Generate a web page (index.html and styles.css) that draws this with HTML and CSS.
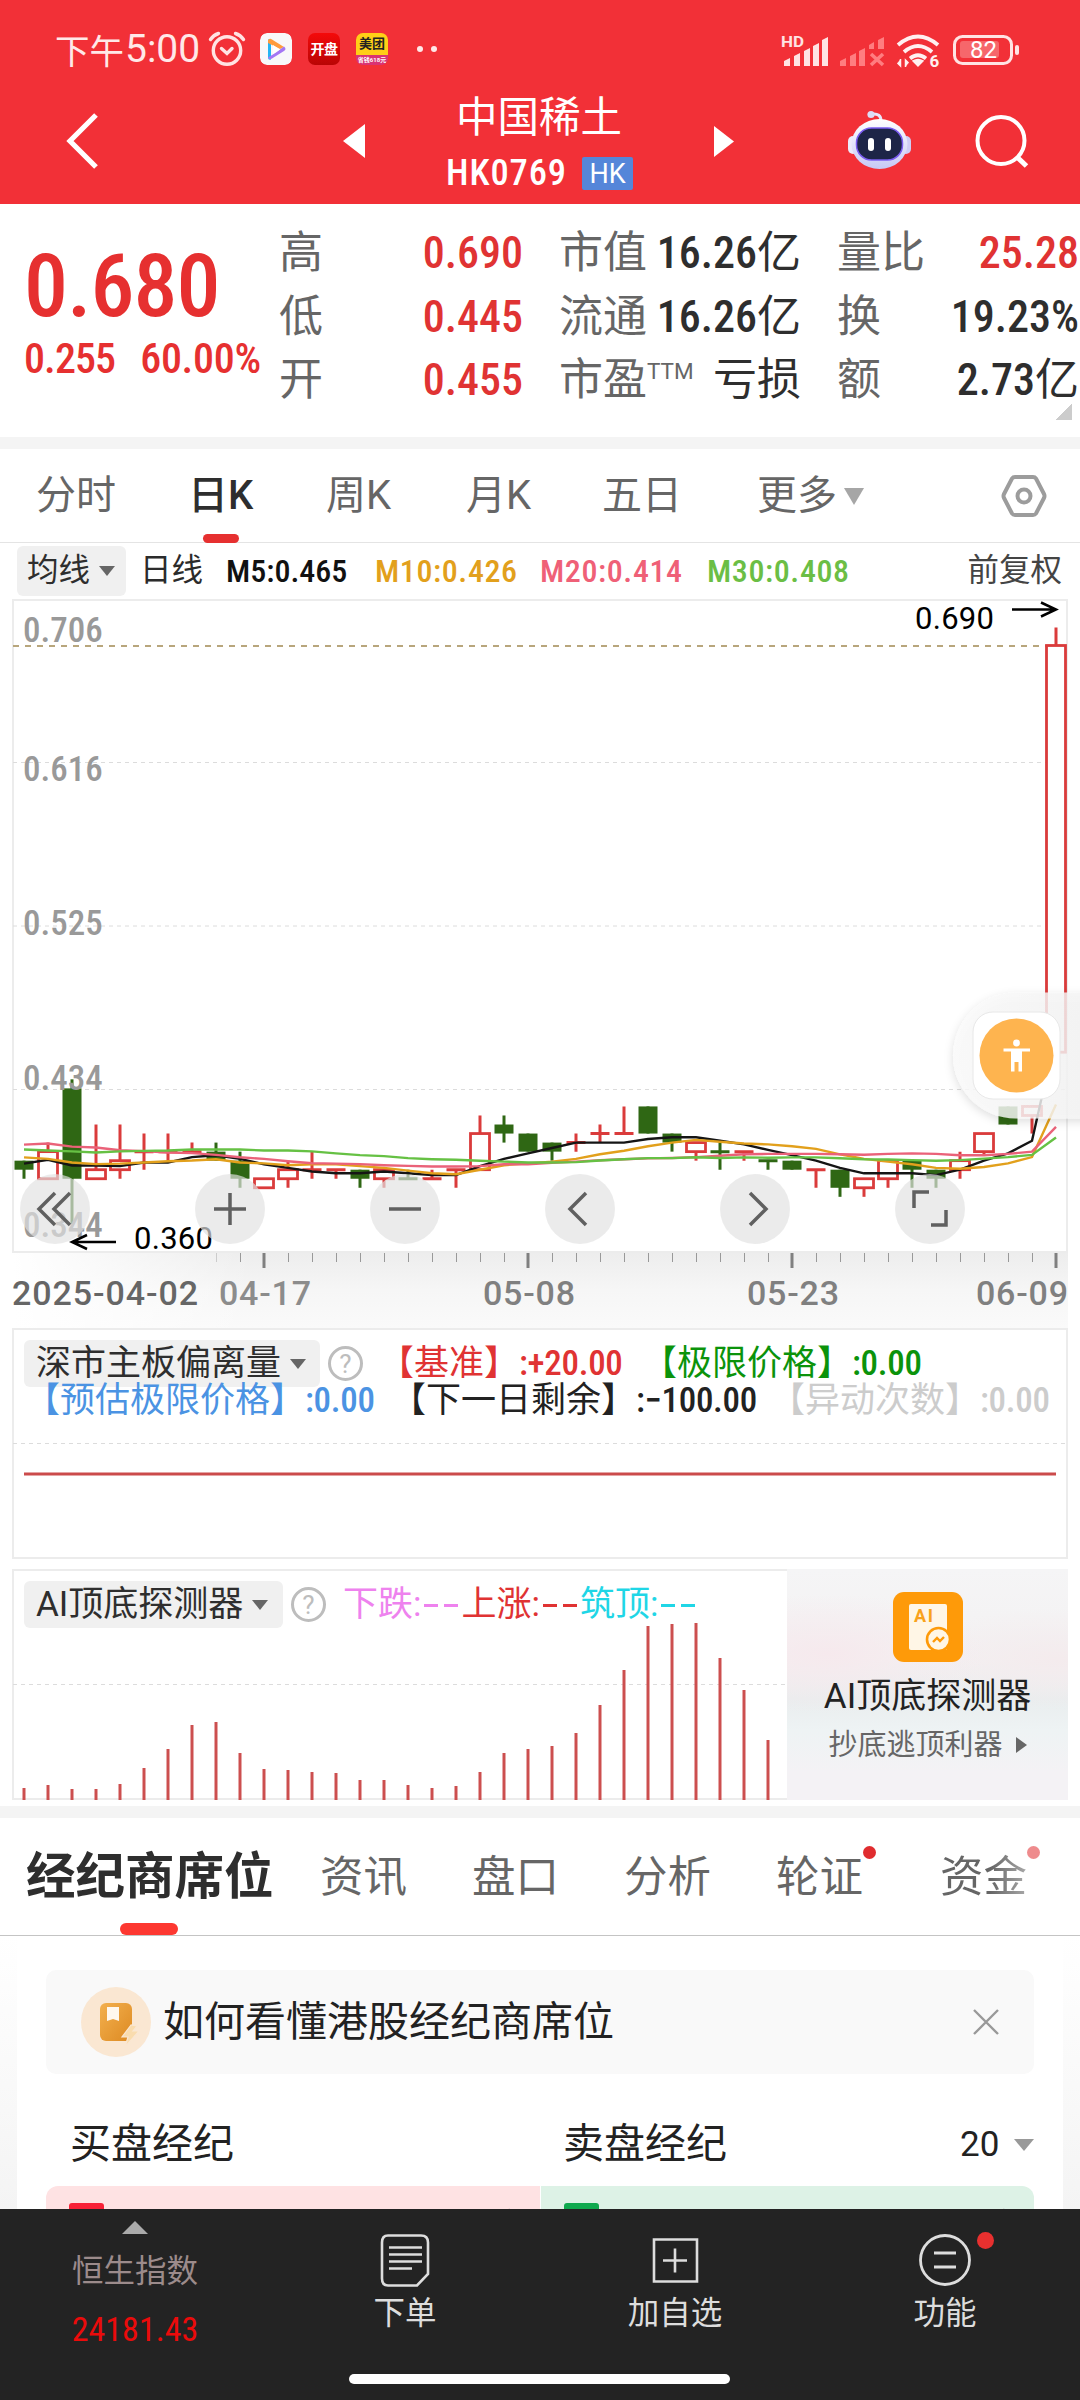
FILE: index.html
```html
<!DOCTYPE html>
<html lang="zh-CN">
<head>
<meta charset="utf-8">
<title>中国稀土 HK0769</title>
<link rel="stylesheet" href="styles.css">
</head>
<body>
<header class="header">
  <div class="status">
    <span class="clock-cn">下午</span><span class="clock">5:00</span>
    <svg class="alarm" width="38" height="38" viewBox="0 0 38 38" fill="none" stroke="#ffe3e3" stroke-width="3.4" stroke-linecap="round"><circle cx="19" cy="20.500" r="13.700"/><path d="M13.500 18.500l5.500 5 5-5M2.500 9.500q3-4.500 8-6M35.500 9.500q-3-4.500-8-6"/></svg>
    <svg class="app" width="32" height="32" viewBox="0 0 32 32"><rect width="32" height="32" rx="7" fill="#f8f8fa"/><path d="M8 8q0-3 3-1.500v20q-3 1-3-2z" fill="#24b4f4"/><path d="M8 7q2-2 4-.5l12 7.500-4 2-12-6z" fill="#ff9b3d"/><path d="M24 13.500q3 2.500 0 4.500l-12 7.500q-3 1.500-4-1l8-5z" fill="#a477f4"/><path d="M13 12v9l7-4.500z" fill="#fff"/></svg>
    <div class="app kaipan">开盘</div>
    <div class="app meituan"><b>美团</b><i>省钱618元</i></div>
    <span class="more-dots"><i></i><i></i></span>
    <svg class="sys" width="240" height="40" viewBox="780 30 240 40">
      <text x="781" y="46.500" font-size="15" font-weight="700" fill="#ffe3e3" textLength="23" lengthAdjust="spacingAndGlyphs">HD</text>
      <path fill="#ffe3e3" d="M784 66v-5l6-3v8zM794 66V56l6-3v13zM804 66V51l6-3v18zM813 66V46l6-3v23zM822 66V40l6-3v29z"/>
      <path fill="#ff7d80" d="M840 66v-5l6-3v8zM850 66V56l6-3v13zM859 66V51l6-3v18zM869 49v-4l5-3v7zM878 49v-9l6-3v12z"/>
      <path d="M871 54l12 11M883 54l-12 11" stroke="#ff7d80" stroke-width="3.600"/>
      <path d="M898 45q20-17 40 0M904 52q14-12 28 0M910 58.500q8-6.500 16 0" fill="none" stroke="#fff0f0" stroke-width="3.800"/>
      <path d="M913 61q5-3 10 0l-5 5zM900.500 59v7l-3-3M905.500 67v-7l3 3" fill="#fff0f0" stroke="#fff0f0" stroke-width="1.500"/>
      <text x="929.500" y="67" font-size="17" font-weight="700" fill="#fff0f0">6</text>
      <rect x="954.500" y="36.500" width="57" height="27" rx="8" fill="none" stroke="#ffe3e3" stroke-width="3"/>
      <rect x="960" y="41" width="39" height="17" rx="3" fill="#f6676b"/>
      <rect x="1015" y="45" width="4" height="10" rx="2" fill="#ffe3e3"/>
      <text x="970" y="58" font-size="24" fill="#fff" textLength="27">82</text>
    </svg>
  </div>
  <div class="nav">
    <svg class="back" width="40" height="64" viewBox="0 0 40 64"><path d="M35 6L9 32l26 26" fill="none" stroke="#fff" stroke-width="5.200"/></svg>
    <svg class="prev" width="24" height="36" viewBox="0 0 24 36"><path d="M23 1v34L1 18z" fill="#fff"/></svg>
    <div class="title"><h1>中国稀土</h1><p><b>HK0769</b><span>HK</span></p></div>
    <svg class="next" width="22" height="34" viewBox="0 0 22 34"><path d="M0 1v31l20-15.500z" fill="#fff"/></svg>
    <svg class="robot" width="66" height="62" viewBox="846 109 66 62">
      <defs><linearGradient id="rim" x1="0" y1="0" x2="0" y2="1"><stop offset="0" stop-color="#fff"/><stop offset="1" stop-color="#c6c8f5"/></linearGradient></defs>
      <path d="M872 113q9-1 9 7" fill="none" stroke="#e8e6fa" stroke-width="3"/><circle cx="871" cy="113.500" r="3.600" fill="#dcdcf5"/>
      <rect x="848" y="135" width="10" height="18" rx="5" fill="#eceafa"/><rect x="901" y="135" width="10" height="18" rx="5" fill="#cfcdf5"/>
      <ellipse cx="879.500" cy="143" rx="28" ry="25" fill="url(#rim)"/>
      <rect x="856.500" y="127" width="46" height="32" rx="15" fill="#1d2547" stroke="#7a5cf0" stroke-width="1.500"/>
      <rect x="868" y="137" width="6" height="13" rx="3" fill="#fff"/><rect x="885" y="137" width="6" height="13" rx="3" fill="#fff"/>
    </svg>
    <svg class="search" width="56" height="56" viewBox="974 112 56 56" fill="none" stroke="#fff" stroke-width="4"><circle cx="1001" cy="139.500" r="23.500"/><path d="M1017 156l9.500 9" stroke-width="5"/></svg>
  </div>
</header>

<section class="quote">
  <div class="price"><strong>0.680</strong><p><span>0.255</span><span>60.00%</span></p></div>
  <dl class="stats">
    <div><dt>高</dt><dd class="up">0.690</dd></div>
    <div><dt>低</dt><dd class="up">0.445</dd></div>
    <div><dt>开</dt><dd class="up">0.455</dd></div>
  </dl>
  <dl class="stats">
    <div><dt>市值</dt><dd>16.26<u>亿</u></dd></div>
    <div><dt>流通</dt><dd>16.26<u>亿</u></dd></div>
    <div><dt>市盈<sup>TTM</sup></dt><dd><u>亏损</u></dd></div>
  </dl>
  <dl class="stats">
    <div><dt>量比</dt><dd class="up">25.28</dd></div>
    <div><dt>换</dt><dd>19.23%</dd></div>
    <div><dt>额</dt><dd>2.73<u>亿</u></dd></div>
  </dl>
  <i class="corner"></i>
</section>

<nav class="periods">
  <span>分时</span><span class="on">日K</span><span>周K</span><span>月K</span><span>五日</span><span>更多<i class="tri"></i></span>
  <svg width="46" height="44" viewBox="1001 474 46 44" fill="none" stroke="#9c9c9c" stroke-width="4"><path d="M1015 477h18q2 0 3 1.500l8 15.500q1 2 0 4l-8 15.500q-1 1.500-3 1.500h-18q-2 0-3-1.500l-8-15.500q-1-2 0-4l8-15.500q1-1.500 3-1.500z"/><circle cx="1024" cy="496" r="6.500"/></svg>
</nav>

<div class="legend">
  <span class="chip">均线<i class="tri"></i></span><span class="day">日线</span>
  <span class="m5">M5:0.465</span><span class="m10">M10:0.426</span><span class="m20">M20:0.414</span><span class="m30">M30:0.408</span><span class="adj">前复权</span>
</div>

<svg id="kline" class="kline" width="1080" height="729" viewBox="0 599 1080 729">
  <defs>
    <linearGradient id="axis" x1="0" y1="0" x2="0" y2="1"><stop offset="0" stop-color="#ededed"/><stop offset=".5" stop-color="#f6f6f6"/><stop offset="1" stop-color="#fafafa"/></linearGradient>
    <linearGradient id="veil"><stop offset="0" stop-color="#fff"/><stop offset="1" stop-color="#fff" stop-opacity="0"/></linearGradient>
    <linearGradient id="pill" x1="0" y1="0" x2="1" y2="0"><stop offset="0" stop-color="#fbfbfb"/><stop offset="1" stop-color="#f3f3f3"/></linearGradient>
    <filter id="soft" x="-20%" y="-20%" width="140%" height="140%"><feDropShadow dx="0" dy="3" stdDeviation="5" flood-opacity=".16"/></filter>
  </defs>
  <rect x="13" y="1253" width="1055" height="75" fill="url(#axis)"/><rect x="13" y="1253" width="240" height="75" fill="url(#veil)"/>
  <rect x="13" y="600" width="1054" height="652" fill="#fff" stroke="#ececec" stroke-width="2"/>
  <path d="M13 762.500H1066M13 926H1066M13 1089.500H1066" stroke="#dcdcdc" stroke-dasharray="4 4"/>
  <path d="M13 646H1046" stroke="#b8a67c" stroke-width="2" stroke-dasharray="6 6"/>
  <g id="plot"></g>
  <g class="ylabels"><text x="23" y="642">0.706</text><text x="23" y="781">0.616</text><text x="23" y="935">0.525</text><text x="23" y="1090">0.434</text><text x="23" y="1237">0.344</text></g>
  <g class="marks"><text x="915" y="629" textLength="79">0.690</text><text x="134" y="1249" textLength="79">0.360</text>
  <path d="M1012 609.500h43M1041 602.500l15 7-15 7M116 1242H74M87 1235l-15 7 15 7" fill="none" stroke="#000" stroke-width="2.500"/></g>
  <g id="ticks"></g>
  <g class="dates"><text x="12" y="1305" textLength="186">2025-04-02</text><text x="219" y="1305" textLength="92" fill="#8c8c8c">04-17</text><text x="483" y="1305" textLength="92" fill="#808080">05-08</text><text x="747" y="1305" textLength="92" fill="#808080">05-23</text><text x="976" y="1305" textLength="92" fill="#808080">06-09</text></g>
  <g fill="#e2e2e2" fill-opacity=".68"><circle cx="55" cy="1209" r="35"/><circle cx="230" cy="1209" r="35"/><circle cx="405" cy="1209" r="35"/><circle cx="580" cy="1209" r="35"/><circle cx="755" cy="1209" r="35"/><circle cx="930" cy="1209" r="35"/></g>
  <g fill="none" stroke="#606060" stroke-width="3.500"><path d="M55 1193l-16 16 16 16M70 1193l-16 16 16 16M214 1209h32M230 1193v32M389 1209h32M586 1193l-16 16 16 16M750 1193l16 16-16 16M914 1208v-16h15M931 1225h15v-15"/></g>
  <g filter="url(#soft)"><path d="M1100 992.500H1016a63 63 0 0 0 0 126h84z" fill="url(#pill)" fill-opacity=".82"/></g>
  <rect x="973" y="1012" width="87" height="87" rx="20" fill="#fff" stroke="#e8e8e8"/>
  <circle cx="1016.500" cy="1055.500" r="37" fill="#feb44f"/>
  <g fill="#fff"><circle cx="1016.500" cy="1043" r="3.400"/><path d="M1003.500 1048.500h26.500v3h-8v20h-3.500v-9.500h-4v9.500H1011v-20h-7.500z"/></g>
</svg>

<section class="panel deviation">
  <svg class="lines" width="1056" height="231" viewBox="12 1328 1056 231"><path d="M13 1443.500H1066" stroke="#dcdcdc" stroke-dasharray="4 4"/><path d="M24 1474H1056" stroke="#cb4b4b" stroke-width="3"/></svg>
  <div class="row first"><span class="chip">深市主板偏离量<i class="tri"></i></span><span class="help">?</span><span class="pair red"><b>【基准】</b><em>:+20.00</em></span><span class="pair green"><b>【极限价格】</b><em>:0.00</em></span></div>
  <div class="row second"><span class="pair blue"><b>【预估极限价格】</b><em>:0.00</em></span><span class="pair dark"><b>【下一日剩余】</b><em>:−100.00</em></span><span class="pair pale"><b>【异动次数】</b><em>:0.00</em></span></div>
</section>

<section class="panel detector">
  <svg class="lines" width="775" height="231" viewBox="12 1569 775 231"><path d="M13 1684.500H786" stroke="#dcdcdc" stroke-dasharray="4 4"/><g id="bars"></g></svg>
  <div class="row"><span class="chip">AI顶底探测器<i class="tri"></i></span><span class="help">?</span><span class="sig pink">下跌:<i></i><i></i></span><span class="sig red">上涨:<i></i><i></i></span><span class="sig cyan">筑顶:<i></i><i></i></span></div>
  <aside class="promo">
    <svg width="70" height="70" viewBox="0 0 70 70"><rect width="70" height="70" rx="11" fill="#fe9a09"/><rect x="16" y="12" width="38" height="46" rx="2" fill="#fff6e6"/><text x="21" y="30" font-size="18" font-weight="700" fill="#f9a21b" textLength="19">AI</text><circle cx="45.500" cy="47.500" r="11.500" fill="#fff6e6" stroke="#fe9a09" stroke-width="2.600"/><path d="M40 50l4-4 3 3 4-4" fill="none" stroke="#fe9a09" stroke-width="2.400"/></svg>
    <h2>AI顶底探测器</h2><p>抄底逃顶利器<i></i></p>
  </aside>
</section>

<nav class="tabs"><span class="on">经纪商席位</span><span>资讯</span><span>盘口</span><span>分析</span><span class="dot">轮证</span><span class="dot fade">资金</span></nav>

<main class="content">
  <div class="card">
    <div class="tip">
      <svg width="70" height="70" viewBox="0 0 70 70"><defs><linearGradient id="book" x1="0" y1="0" x2="1" y2="1"><stop offset="0" stop-color="#f3b04e"/><stop offset="1" stop-color="#dd8a22"/></linearGradient></defs><circle cx="35" cy="35" r="35" fill="#fae7d2"/><rect x="19" y="16" width="32" height="38" rx="6" fill="url(#book)"/><path d="M26 20h12v14l-6-2-6 2z" fill="#fff8ee"/><path d="M50 38l-9 12h6l-3 10 14-16h-6l4-5z" fill="#f9dcae" stroke="#fae7d2" stroke-width="1.200"/></svg>
      <span>如何看懂港股经纪商席位</span>
      <svg class="close" width="28" height="28" viewBox="0 0 28 28"><path d="M2 2l24 24M26 2L2 26" stroke="#999" stroke-width="2.400"/></svg>
    </div>
    <div class="heads"><span>买盘经纪</span><span>卖盘经纪</span><span class="num">20<i class="tri"></i></span></div>
    <div class="brokers"><div class="buy"><i></i><span>百信亨</span></div><div class="sell"><i></i><span>百信亨</span></div></div>
  </div>
</main>

<footer class="dock">
  <div class="index"><i></i><span>恒生指数</span><b>24181.43</b></div>
  <div><svg width="50" height="54" viewBox="380 2233 50 54" fill="none" stroke="#ddd"><path d="M388 2235.500h33q7 0 7 7v31.500l-11 11.500h-29q-6 0-6-7v-36q0-7 6-7zM389 2247.500h33M389 2254.500h33M389 2261.500h33M389 2268.500h23" stroke-width="2.600"/></svg><span>下单</span></div>
  <div><svg width="50" height="54" viewBox="650 2233 50 54" fill="none" stroke="#ddd" stroke-width="2.600"><path d="M654 2239.500h43v42h-43zM663 2260.500h24M675 2248.500v24"/></svg><span>加自选</span></div>
  <div><svg width="74" height="54" viewBox="908 2233 74 54" overflow="visible" fill="none" stroke="#ddd" stroke-width="2.800"><circle cx="945" cy="2260" r="24.500"/><path d="M934 2253h22M934 2267h22"/><circle cx="985.500" cy="2240.500" r="8.500" fill="#e8302f" stroke="none"/></svg><span>功能</span></div>
  <i class="homebar"></i>
</footer>
<script src="chart.js"></script>
</body>
</html>
```
FILE: styles.css
```css
* { box-sizing: border-box; margin: 0; padding: 0; }
i, em { font-style: normal; }
u { text-decoration: none; font-weight: 400; }
body { width: 1080px; height: 2400px; overflow: hidden; background: #fff; color: #2b2b2b; font-family: Roboto, "Noto Sans CJK SC", sans-serif; font-size: 40px; }
svg { display: block; flex: none; }
svg text { font-family: Roboto, "Noto Sans CJK SC", sans-serif; }
.tri { display: inline-block; flex: none; border-style: solid; border-color: #666 transparent transparent; border-width: 10px 8px 0; }

/* header */
.header { height: 204px; background: #f23037; color: #fff; }
.status { height: 98px; padding-left: 55px; display: flex; align-items: center; position: relative; color: #ffe8e8; }
.clock-cn { font-size: 34.5px; width: 70px; }
.clock { font-size: 39px; width: 75px; }
.alarm { margin: 0 14px 0 8px; }
.app { width: 32px; height: 32px; margin-right: 16px; border-radius: 7px; flex: none; }
.kaipan { background: linear-gradient(#f50a0a, #b90505); color: #fff; font-size: 14px; font-weight: 700; line-height: 32px; text-align: center; white-space: nowrap; letter-spacing: -.5px; }
.meituan { background: linear-gradient(#ffcf17 68%, #d93373 68%); color: #222; text-align: center; overflow: hidden; }
.meituan b { display: block; font-size: 13px; line-height: 21px; }
.meituan i { display: block; font-size: 6px; line-height: 11px; color: #fff; white-space: nowrap; font-weight: 700; }
.more-dots { display: flex; gap: 8px; margin-left: 13px; }
.more-dots i { width: 6px; height: 6px; border-radius: 50%; background: #ffe8e8; }
.sys { position: absolute; left: 780px; top: 30px; }
.nav { height: 106px; display: grid; grid-template-columns: 61px 281px 104px 188px 80px 132px 128px 56px; align-items: center; }
.back { grid-column: 2; margin-top: -22px; }
.prev { grid-column: 3; margin-top: -22px; }
.title { grid-column: 4; align-self: start; white-space: nowrap; }
.title h1 { font-size: 41.5px; font-weight: 400; line-height: 42px; margin: -1px 0 0 10px; }
.title p { display: flex; align-items: center; height: 66px; margin-top: 1px; }
.title b { width: 136px; font-size: 36.5px; font-weight: 500; font-stretch: 80%; line-height: 66px; letter-spacing: .9px; }
.title span { width: 51px; height: 33px; line-height: 34px; background: #5586d9; border-radius: 2px; font-size: 27px; text-align: center; }
.next { grid-column: 5; justify-self: end; margin: -20px -22px 0 0; }
.robot { grid-column: 7; margin-top: -22px; }
.search { grid-column: 8; margin-top: -22px; }

/* quote */
.quote { height: 233px; display: grid; grid-template-columns: 243px 244px 242px 242px; column-gap: 36px; padding-top: 18px; position: relative; }
.price { color: #e63030; padding-left: 24px; font-stretch: 75%; font-weight: 500; }
.price strong { display: block; font-size: 88px; font-weight: 500; line-height: 90px; padding-top: 19px; letter-spacing: -1px; }
.price p { display: flex; font-size: 42px; line-height: 42px; gap: 25px; margin-top: 7px; white-space: nowrap; letter-spacing: -.9px; }
.price p span + span { letter-spacing: -.3px; }
.stats div { display: flex; justify-content: space-between; align-items: center; height: 63.5px; line-height: 63px; font-size: 44px; }
.stats dt { color: #666; }
.stats dt sup { font-size: 22.5px; line-height: 0; vertical-align: 16px; }
.stats dd { color: #2e2e2e; font-weight: 500; font-stretch: 75%; }
.stats dd.up { color: #e03333; }
.corner { position: absolute; right: 8px; bottom: 17px; width: 16px; height: 16px; background: linear-gradient(135deg, transparent 50%, #ccc 50%); }

/* period tabs */
.periods { height: 106px; border-top: 12px solid #f4f4f4; border-bottom: 1px solid #e4e4e4; padding-left: 36px; display: grid; grid-template-columns: 152px 138px 140px 136px 155px 244px 46px; align-items: center; color: #666; font-size: 40px; line-height: 93px; }
.periods .on { color: #2e2e2e; font-weight: 500; position: relative; }
.periods .on::after { content: ""; position: absolute; left: 15px; bottom: -1px; width: 36px; height: 9px; border-radius: 5px; background: #e63030; }
.periods .tri { border-color: #a6a6a6 transparent transparent; border-width: 17px 10px 0; margin-left: 7px; vertical-align: 4px; }

/* legend */
.legend { height: 56px; display: flex; align-items: center; padding: 0 20px 0 17px; font-size: 31.5px; line-height: 50px; white-space: nowrap; }
.chip { display: flex; align-items: center; background: #f0f0f0; border-radius: 6px; color: #2e2e2e; flex: none; }
.legend .chip { width: 109px; height: 50px; padding-left: 10px; gap: 9px; }
.day { margin-left: 14px; width: 72px; }
.m5, .m10, .m20, .m30 { font-weight: 500; font-stretch: 84%; font-size: 32px; letter-spacing: .6px; }
.m5 { color: #111; width: 149px; margin-left: 14px; letter-spacing: 0; } .m10 { color: #e2a01c; width: 165px; } .m20 { color: #ef6077; width: 167px; } .m30 { color: #6bbe45; }
.adj { margin-left: auto; margin-right: -2px; color: #444; }

/* chart */
.ylabels text { font-size: 35px; font-stretch: 78%; fill: #999; font-weight: 500; }
.marks text { font-size: 31px; fill: #000; }
.dates text { font-size: 34px; font-stretch: 88%; font-weight: 500; }
.dates text:first-child { fill: #666; }

/* indicator panels */
.panel { margin: 0 12px; width: 1056px; height: 231px; border: 2px solid #ececec; position: relative; white-space: nowrap; }
.lines { position: absolute; left: -2px; top: -2px; }
.row { display: flex; align-items: center; position: relative; font-size: 35px; height: 47px; }
.row .chip { height: 47px; padding-left: 12px; gap: 9px; line-height: 47px; }
.row.first { margin-top: 10px; padding-left: 10px; }
.row.first .chip { width: 296px; }
.help { width: 35px; height: 35px; margin-left: 8px; border: 3px solid #bdbdbd; border-radius: 50%; color: #bdbdbd; font-size: 26px; line-height: 30px; text-align: center; flex: none; }
.pair { display: flex; line-height: 38px; }
.pair b { font-weight: 400; }
.pair em { font-weight: 500; font-stretch: 78%; letter-spacing: -.3px; }
.red { color: #e03333; } .green { color: #0b930b; } .blue { color: #4b93e3; } .dark { color: #222; } .pale { color: #ccc; }
.first .red { margin-left: 16px; width: 263px; }
.first .red b { width: 140px; } .first .green b { width: 210px; }
.second { height: 38px; margin-top: -5px; padding-left: 11px; }
.second .blue { width: 366px; } .second .dark { width: 379px; }
.second .blue b { width: 280px; } .second .dark b { width: 245px; } .second .pale b { width: 210px; }
.detector { margin-top: 10px; }
.detector .row { margin-top: 10px; padding-left: 10px; }
.detector .chip { width: 259px; }
.detector .help { margin-right: 17px; }
.sig { display: flex; align-items: center; width: 118.5px; line-height: 46px; }
.sig i { width: 15px; height: 3px; background: currentColor; margin: 2px 3px 0; }
.pink { color: #ee82ee; } .cyan { color: #1fd6e6; }
.promo { position: absolute; left: 773px; top: -2px; width: 281px; height: 231px; display: flex; flex-direction: column; align-items: center; padding-top: 23px; background: radial-gradient(ellipse 160px 60px at 40px 85px, #f6e9ed, transparent), radial-gradient(ellipse 150px 50px at 270px 90px, #f4ebed, transparent), linear-gradient(#f5f5f6 0, #f3f1f2 40%, #e9edee 56%, #eef3f4 70%, #f4f2f5 88%); }
.promo h2 { font-size: 35px; font-weight: 400; line-height: 50px; color: #222; margin-top: 10px; }
.promo p { font-size: 29px; line-height: 46px; color: #666; display: flex; align-items: center; gap: 13px; }
.promo p i { border: solid transparent; border-width: 8px 0 8px 11px; border-left-color: #666; }

/* content tabs */
.tabs { margin-top: 6px; height: 130px; border-top: 12px solid #f4f4f4; border-bottom: 1px solid #c4c4c4; display: grid; grid-template-columns: 294px 152px 152px 152px 164px 100px; padding-left: 26px; font-size: 43.5px; color: #666; line-height: 119px; white-space: nowrap; }
.tabs span { position: relative; height: 117px; }
.tabs .on { font-size: 49.5px; font-weight: 700; color: #2e2e2e; }
.tabs .on::after { content: ""; position: absolute; left: 94px; bottom: 0; width: 58px; height: 12px; border-radius: 6px; background: #fd3831; }
.tabs .dot::after { content: ""; position: absolute; left: 87px; top: 28px; width: 13px; height: 13px; border-radius: 50%; background: #e02c2f; }
.tabs .fade { background: linear-gradient(90deg, #666 50px, #aaa 88px) text; color: transparent; }
.tabs .fade::after { opacity: .55; }

/* brokers */
.content { height: 273px; padding: 0 17px; background: linear-gradient(#fff, #f4f4f4); overflow: hidden; }
.card { background: #fff; height: 273px; padding: 34px 29px 0; }
.tip { height: 104px; border-radius: 10px; background: #f9f9f9; padding: 0 34px 0 35px; display: flex; align-items: center; font-size: 41px; color: #222; gap: 12px; line-height: 105px; }
.tip .close { margin-left: auto; }
.heads { display: grid; grid-template-columns: 493px 397px auto; padding-left: 24px; font-size: 41px; line-height: 81px; height: 80px; margin-top: 30px; color: #222; }
.num { font-size: 35px; display: flex; align-items: center; gap: 15px; justify-content: flex-end; }
.num .tri { border-color: #999 transparent transparent; border-width: 12px 10.5px 0; margin-top: 1px; }
.brokers { display: grid; grid-template-columns: 1fr 1fr; gap: 1px; margin-top: 2px; border-radius: 12px 12px 0 0; overflow: hidden; height: 76px; }
.brokers div { display: flex; justify-content: space-between; padding: 17px 12px 0 23px; font-size: 36px; line-height: 50px; }
.buy { background: #fee2e3; } .sell { background: #ddf2e6; }
.brokers i { width: 35px; height: 40px; border-radius: 3px; background: #f72137; }
.sell i { background: #0fa94e; }

/* dock */
.dock { height: 192px; background: #232323; display: grid; grid-template-columns: repeat(4, 270px); position: relative; color: #ddd; font-size: 31.5px; line-height: 42px; }
.dock div { display: flex; flex-direction: column; align-items: center; padding-top: 24px; }
.dock div span { margin-top: 6px; }
.dock .index { padding-top: 12px; }
.index i { border: solid transparent; border-width: 0 13px 13px; border-bottom-color: #aaa; }
.dock .index span { margin-top: 17px; color: #9c8b8b; }
.index b { font-weight: 400; color: #eb0b0b; font-size: 34px; font-stretch: 75%; margin-top: 15px; }
.homebar { position: absolute; left: 349px; top: 165px; width: 381px; height: 10px; border-radius: 5px; background: #fff; }
```
FILE: chart.js
```js
// Daily candles: open, high, low, close, in thousandths of a dollar.
const candles = [
  [395,395,385,390],[385,405,385,400],[435,440,360,385],[385,415,385,390],[390,415,385,395],
  [400,410,390,400],[400,410,395,400],[400,405,400,400],[400,405,395,395],[395,400,380,385],
  [380,385,380,385],[385,395,380,390],[390,400,385,390],[390,390,385,390],[390,390,380,385],
  [385,390,380,390],[385,390,385,385],[385,390,385,385],[390,390,380,390],[390,420,390,410],
  [415,420,405,410],[410,410,400,400],[405,405,395,400],[405,410,400,405],[410,415,405,410],
  [410,425,410,410],[425,425,410,410],[410,410,400,405],[400,405,395,405],[400,405,390,400],
  [400,400,395,400],[395,395,390,395],[395,395,390,390],[390,390,380,390],[390,390,375,380],
  [380,385,375,385],[385,395,380,395],[395,395,380,390],[390,390,380,385],[390,400,385,395],
  [400,410,398,410],[425,425,415,415],[420,425,410,425],[455,690,445,680]
];
const greenDoji = new Set([16, 29, 31]);
// Averages for the days whose look-back window starts before the first candle.
const averages = [
  { n: 5, color: '#151515', seed: [393.4,395.5,392.3,392.3] },
  { n: 10, color: '#e2a01c', seed: [396.8,396,394,393.1,393.4,394,394.7,395.1,395.8] },
  { n: 20, color: '#ea6279', seed: [403.9,404.5,402.8,402.3,400.8,400.3,399.5,399.2,398.2,396.9,396,394.7,393.6,393.4,393.1,392.5,392.1,391.8,391.8] },
  { n: 30, color: '#66c144', seed: [401.2,400.6,400.1,399.5,400.1,400.4,400.6,401.2,401.2,401.2,400.6,400.6,400.1,399,398.1,397.5,396.4,395.8,395.5,394.9,394.5,394,394,394.2,395.1,395.8,396.4,396.4,396.9] }
];
const RED = '#da3b3b', GREEN = '#2f6714';
const X = i => 24 + 24 * i;
const Y = p => 645.5 + (680 - p) * 1.8076;

let svg = '';
candles.forEach(([o, h, l, c], i) => {
  const x = X(i), top = Y(Math.max(o, c)), bot = Y(Math.min(o, c));
  const green = c < o || greenDoji.has(i), col = green ? GREEN : RED;
  if (o === c) {
    svg += `<path d="M${x} ${Y(h)}V${Y(l)}M${x - 9.5} ${top}h19" stroke="${col}" stroke-width="3"/>`;
  } else if (green) {
    svg += `<path d="M${x} ${Y(h)}V${Y(l)}" stroke="${col}" stroke-width="3"/><rect x="${x - 9.5}" y="${top}" width="19" height="${bot - top}" fill="${col}"/>`;
  } else {
    svg += `<path d="M${x} ${Y(h)}V${top}M${x} ${bot}V${Y(l)}" stroke="${col}" stroke-width="3"/><rect x="${x - 9.5}" y="${top}" width="19" height="${bot - top}" fill="#fff" stroke="${col}" stroke-width="2.8"/>`;
  }
});
averages.forEach(({ n, color, seed }) => {
  const pts = candles.map((_, i) => {
    const v = i < seed.length ? seed[i] : candles.slice(i - n + 1, i + 1).reduce((s, k) => s + k[3], 0) / n;
    return X(i) + ',' + Y(v).toFixed(1);
  });
  svg += `<polyline points="${pts.join(' ')}" fill="none" stroke="${color}" stroke-width="2.4"/>`;
});
document.getElementById('plot').innerHTML = svg;

let ticks = '';
for (let i = 8; i < 44; i++) {
  const major = (i - 10) % 11 === 0;
  ticks += major
    ? `<path d="M${X(i)} 1253v15" stroke="#808080" stroke-width="3"/>`
    : `<path d="M${X(i) + .5} 1253v9" stroke="${i === 8 ? '#ccc' : '#999'}"/>`;
}
document.getElementById('ticks').innerHTML = ticks;

// Detector bars, height in pixels above the panel's lower edge.
const heights = [12,15,11,11,16,32,51,75,78,47,31,30,28,27,20,20,15,12,14,28,47,51,54,67,95,130,174,176,177,142,110,60];
document.getElementById('bars').innerHTML = heights
  .map((h, i) => `<path d="M${X(i)} 1800v${-h}" stroke="#cc4f4f" stroke-width="3"/>`).join('');
```
